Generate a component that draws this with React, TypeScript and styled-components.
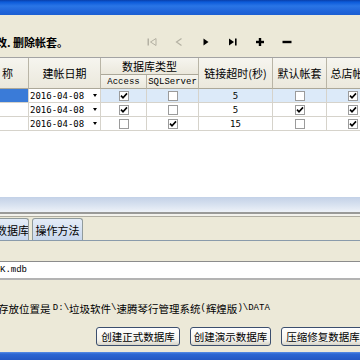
import React from "react";
import styled, { createGlobalStyle } from "styled-components";

const CJK = `"Noto Sans CJK SC", "Liberation Sans", sans-serif`;
const MONO = `"Liberation Mono", "DejaVu Sans Mono", monospace`;
const DIGITS = `"DejaVu Sans Mono", "Liberation Mono", monospace`;

const GlobalStyle = createGlobalStyle`
  html, body {
    margin: 0;
    padding: 0;
    background: #ece9d8;
    overflow: hidden;
  }
  * {
    box-sizing: border-box;
  }
`;

const Window = styled.div`
  width: 360px;
  height: 360px;
  display: flex;
  flex-direction: column;
  overflow: hidden;
  font-family: ${CJK};
  font-size: 11px;
  color: #000;
  background: #ece9d8;
`;

const TitleBar = styled.div`
  height: 15px;
  flex: none;
  background: linear-gradient(
    180deg,
    #0a3fa8 0px,
    #0b5ad9 2px,
    #2a75e6 6px,
    #1f63d8 12px,
    #1c5fd2 15px
  );
`;

const Toolbar = styled.div`
  height: 42px;
  flex: none;
  display: flex;
  align-items: center;
  padding-top: 12px;
`;

const Caption = styled.div`
  flex: none;
  width: 142px;
  margin-left: -4px;
  font-weight: bold;
  white-space: nowrap;
  line-height: 14px;
`;

const NavButton = styled.div`
  width: 27px;
  height: 16px;
  flex: none;
  display: flex;
  align-items: center;
  justify-content: center;
`;

const GridPanel = styled.div`
  height: 140px;
  flex: none;
  background: #fff;
  border-top: 1px solid #a3a3a3;
  overflow: hidden;
`;

const COLS = "29px 72px 46px 52px 74px 54px 52px";

const HeaderGrid = styled.div`
  display: grid;
  grid-template-columns: ${COLS};
  grid-template-rows: 17px 14px;
  width: 379px;
`;

const HeadCell = styled.div<{ $span?: number; $rows?: number; $mono?: boolean }>`
  grid-column: span ${({ $span }) => $span || 1};
  grid-row: span ${({ $rows }) => $rows || 1};
  display: flex;
  align-items: center;
  justify-content: center;
  white-space: nowrap;
  overflow: hidden;
  background: linear-gradient(180deg, #f6f5ef 0%, #ebe8dc 100%);
  border-right: 1px solid #b9b5a6;
  border-bottom: 1px solid #aca899;
  font-family: ${({ $mono }) => ($mono ? MONO : CJK)};
  font-size: ${({ $mono }) => ($mono ? "9px" : "11px")};
`;

const DataRow = styled.div<{ $selected?: boolean }>`
  display: grid;
  grid-template-columns: ${COLS};
  height: 14px;
  width: 379px;
  background: ${({ $selected }) => ($selected ? "#dceaf9" : "#fff")};
  border-bottom: 1px solid #d6d3cb;
`;

const Cell = styled.div<{ $focus?: boolean; $white?: boolean }>`
  display: flex;
  align-items: center;
  justify-content: center;
  border-right: 1px solid #d6d3cb;
  font-family: ${DIGITS};
  font-size: 9px;
  background: ${({ $focus, $white }) =>
    $focus ? "#3a7bd8" : $white ? "#fff" : "transparent"};
`;

const DateCell = styled(Cell)`
  justify-content: space-between;
  padding: 0 3px 0 1px;
`;

const Arrow = styled.span`
  width: 0;
  height: 0;
  border-left: 2.5px solid transparent;
  border-right: 2.5px solid transparent;
  border-top: 3px solid #000;
`;

const Box = styled.div`
  width: 10px;
  height: 10px;
  border: 1px solid #9b9b9b;
  background: #fff;
  display: flex;
  align-items: center;
  justify-content: center;
`;

const Splitter = styled.div`
  height: 15px;
  flex: none;
  background: linear-gradient(180deg, #c3d1e7 0%, #dbe4f1 60%, #eef2f8 100%);
`;

const Divider = styled.div`
  height: 5px;
  flex: none;
  border-top: 2px solid #9a9a98;
  border-bottom: 1px solid #b0ada0;
  background: #f3f2ec;
`;

const TabStrip = styled.div`
  height: 24px;
  flex: none;
  display: flex;
  align-items: flex-end;
  gap: 3px;
  border-bottom: 1px solid #8a9bab;
`;

const Tab = styled.div<{ $width: number; $shift?: number }>`
  width: ${({ $width }) => $width}px;
  height: 22px;
  flex: none;
  display: flex;
  align-items: center;
  justify-content: center;
  white-space: nowrap;
  overflow: hidden;
  border: 1px solid #919b9c;
  border-bottom: none;
  border-radius: 3px 3px 0 0;
  background: linear-gradient(180deg, #e4ecf7 0%, #c9d8ee 100%);
  margin-left: ${({ $shift }) => $shift || 0}px;
  padding-top: 1px;
`;

const Panel = styled.div`
  flex: 1;
  display: flex;
  flex-direction: column;
`;

const Field = styled.div`
  margin-top: 20px;
  height: 19px;
  flex: none;
  background: #fff;
  border-top: 1px solid #8c8c8c;
  border-bottom: 2px solid #b3b3b3;
  display: flex;
  align-items: center;
  font-family: ${MONO};
  font-size: 9px;
`;

const PathLine = styled.div`
  margin-top: 21px;
  height: 14px;
  flex: none;
  display: flex;
  align-items: center;
  white-space: nowrap;
  margin-left: -2px;
  font-size: 10.5px;
`;

const Mono = styled.span`
  font-family: ${MONO};
  font-size: 9px;
`;

const ButtonRow = styled.div`
  margin-top: 12px;
  padding-left: 96px;
  display: flex;
  gap: 10px;
  white-space: nowrap;
`;

const Button = styled.div<{ $width: number }>`
  width: ${({ $width }) => $width}px;
  height: 19px;
  flex: none;
  display: flex;
  align-items: center;
  justify-content: center;
  border: 1px solid #3c4f6e;
  border-radius: 3px;
  background: linear-gradient(180deg, #ffffff 0%, #f4f3ee 70%, #d8d5c8 100%);
  font-size: 10.5px;
`;

const Taskbar = styled.div`
  height: 8px;
  flex: none;
  background: linear-gradient(180deg, #5a8ee6 0px, #2c67d3 2px, #2458c4 8px);
`;

const Check = ({ on }: { on?: boolean }) => (
  <Box>
    {on && (
      <svg width="8" height="8" viewBox="0 0 8 8">
        <path d="M1 3.6 L3 5.8 L7 1.4" fill="none" stroke="#000" strokeWidth="1.6" />
      </svg>
    )}
  </Box>
);

const rows = [
  { date: "2016-04-08", access: true, sql: false, timeout: "5", def: false, shop: true },
  { date: "2016-04-08", access: true, sql: false, timeout: "5", def: true, shop: true },
  { date: "2016-04-08", access: false, sql: true, timeout: "15", def: false, shop: true },
];

export default function App() {
  return (
    <>
      <GlobalStyle />
      <Window>
        <TitleBar />
        <Toolbar>
          <Caption>改. 删除帐套。</Caption>
          <NavButton>
            <svg width="12" height="10" viewBox="0 0 12 10">
              <rect x="1.5" y="1.5" width="1.5" height="7" fill="#b4b1a3" />
              <path d="M10 1.5 L4.5 5 L10 8.5 Z" fill="none" stroke="#b4b1a3" />
            </svg>
          </NavButton>
          <NavButton>
            <svg width="10" height="10" viewBox="0 0 10 10">
              <path d="M7.5 1.5 L2.5 5 L7.5 8.5" fill="none" stroke="#b4b1a3" strokeWidth="1.2" />
            </svg>
          </NavButton>
          <NavButton>
            <svg width="10" height="10" viewBox="0 0 10 10">
              <path d="M2.5 1.5 L7.5 5 L2.5 8.5 Z" fill="#000" />
            </svg>
          </NavButton>
          <NavButton>
            <svg width="12" height="10" viewBox="0 0 12 10">
              <path d="M2 1.5 L7 5 L2 8.5 Z" fill="#000" />
              <rect x="8" y="1.5" width="1.6" height="7" fill="#000" />
            </svg>
          </NavButton>
          <NavButton>
            <svg width="10" height="10" viewBox="0 0 10 10">
              <rect x="1" y="3.8" width="8" height="2.4" fill="#000" />
              <rect x="3.8" y="1" width="2.4" height="8" fill="#000" />
            </svg>
          </NavButton>
          <NavButton>
            <svg width="10" height="10" viewBox="0 0 10 10">
              <rect x="0.5" y="3.8" width="9" height="2.4" fill="#000" />
            </svg>
          </NavButton>
        </Toolbar>

        <GridPanel>
          <HeaderGrid>
            <HeadCell $rows={2} style={{ justifyContent: "flex-start", paddingLeft: 2 }}>
              称
            </HeadCell>
            <HeadCell $rows={2}>建帐日期</HeadCell>
            <HeadCell $span={2}>数据库类型</HeadCell>
            <HeadCell $rows={2}>链接超时(秒)</HeadCell>
            <HeadCell $rows={2}>默认帐套</HeadCell>
            <HeadCell $rows={2}>总店帐套</HeadCell>
            <HeadCell $mono>Access</HeadCell>
            <HeadCell $mono>SQLServer</HeadCell>
          </HeaderGrid>
          {rows.map((r, i) => (
            <DataRow key={i} $selected={i === 0}>
              <Cell $focus={i === 0} />
              <DateCell $white>
                <span>{r.date}</span>
                <Arrow />
              </DateCell>
              <Cell>
                <Check on={r.access} />
              </Cell>
              <Cell>
                <Check on={r.sql} />
              </Cell>
              <Cell>{r.timeout}</Cell>
              <Cell>
                <Check on={r.def} />
              </Cell>
              <Cell>
                <Check on={r.shop} />
              </Cell>
            </DataRow>
          ))}
        </GridPanel>

        <Splitter />
        <Divider />

        <TabStrip>
          <Tab $width={33} $shift={-4}>
            数据库
          </Tab>
          <Tab $width={51}>操作方法</Tab>
        </TabStrip>

        <Panel>
          <Field>K.mdb</Field>
          <PathLine>
            存放位置是&nbsp;<Mono>D:\</Mono>垃圾软件<Mono>\</Mono>速腾琴行管理系统<Mono>(</Mono>辉煌版
            <Mono>)\DATA</Mono>
          </PathLine>
          <ButtonRow>
            <Button $width={84}>创建正式数据库</Button>
            <Button $width={81}>创建演示数据库</Button>
            <Button $width={84}>压缩修复数据库</Button>
          </ButtonRow>
        </Panel>
        <Taskbar />
      </Window>
    </>
  );
}
